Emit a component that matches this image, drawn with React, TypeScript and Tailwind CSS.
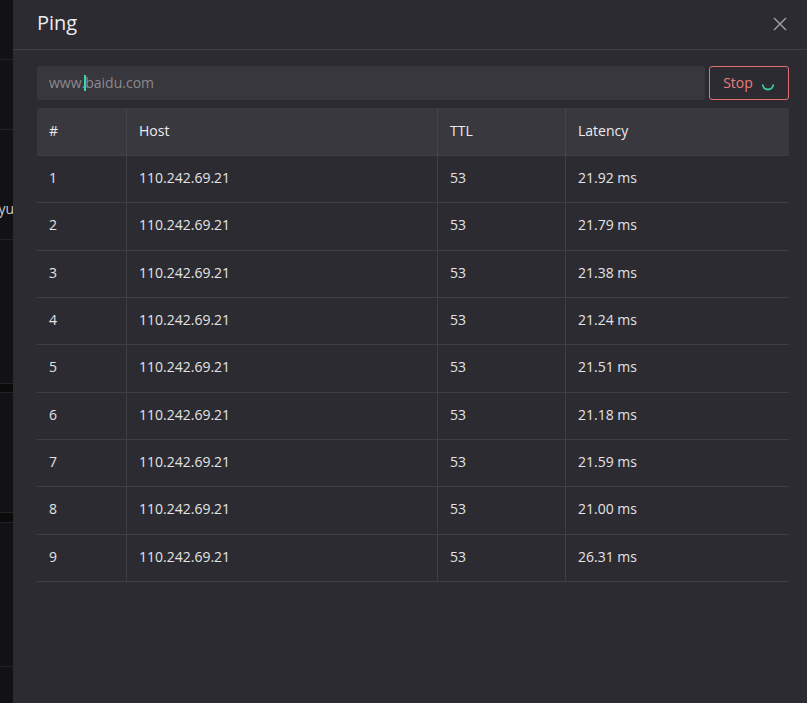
/**
 * Ping drawer — host ping results over a dimmed page.
 */
const ROWS = [
  { seq: 1, host: "110.242.69.21", ttl: 53, latency: "21.92 ms" },
  { seq: 2, host: "110.242.69.21", ttl: 53, latency: "21.79 ms" },
  { seq: 3, host: "110.242.69.21", ttl: 53, latency: "21.38 ms" },
  { seq: 4, host: "110.242.69.21", ttl: 53, latency: "21.24 ms" },
  { seq: 5, host: "110.242.69.21", ttl: 53, latency: "21.51 ms" },
  { seq: 6, host: "110.242.69.21", ttl: 53, latency: "21.18 ms" },
  { seq: 7, host: "110.242.69.21", ttl: 53, latency: "21.59 ms" },
  { seq: 8, host: "110.242.69.21", ttl: 53, latency: "21.00 ms" },
  { seq: 9, host: "110.242.69.21", ttl: 53, latency: "26.31 ms" },
];

const GRID = "grid grid-cols-[89px_311px_128px_1fr]";
const CELL = "flex items-center px-[12px] pb-[3px]";

export default function App() {
  return (
    <div
      className="flex w-[807px] h-[703px] overflow-hidden bg-[#121214] text-[#e3e3e6]"
      style={{ fontFamily: '"Open Sans", "Noto Sans", sans-serif' }}
    >
      <BackdropStrip />

      {/* Drawer */}
      <div className="flex-1 flex flex-col bg-[#2c2b31]">
        <div className="h-[50px] shrink-0 flex items-center justify-between pl-[24px] pr-[20px] border-b border-[#3e3d43]">
          <span className="text-[20px] text-[#ececef] -mt-[4px]">Ping</span>
          <svg width="14" height="14" viewBox="0 0 14 14" className="-mt-[2px]">
            <path d="M1 1L13 13M13 1L1 13" stroke="#a3a3a8" strokeWidth="1.4" />
          </svg>
        </div>

        <div className="flex flex-col pl-[24px] pr-[18px] pt-[16px]">
          {/* Host input + stop */}
          <div className="flex gap-[4px] h-[34px]">
            <div className="flex-1 flex items-center bg-[#38373d] rounded-[2px] px-[12px] pb-[1px] text-[14px] text-[#8b8a90]">
              <span>www.</span>
              <span className="w-[1.5px] h-[16px] bg-[#3dd6a8] -mx-[0.75px]" />
              <span>baidu.com</span>
            </div>
            <button className="w-[80px] flex items-center justify-center gap-[8px] border border-[#e27272] rounded-[3px] text-[14px] text-[#ec7b7b]">
              <span className="-mt-[1px]">Stop</span>
              <svg width="14" height="14" viewBox="0 0 14 14" className="mt-[1px]">
                <path d="M1.8 8.2A5.3 5.3 0 0 0 12.2 8.2" fill="none" stroke="#3ec79f" strokeWidth="1.8" strokeLinecap="round" />
              </svg>
            </button>
          </div>

          {/* Results table */}
          <div className="mt-[8px] text-[14px]">
            <div className={`${GRID} h-[48px] bg-[#39383e] rounded-t-[3px] border-b border-[#3f3e44]`}>
              {["#", "Host", "TTL", "Latency"].map((h, i) => (
                <div
                  key={h}
                  className={`${CELL} text-[#ececef] ${i > 0 ? "border-l border-[#45444a]" : ""}`}
                >
                  {h}
                </div>
              ))}
            </div>
            {ROWS.map((r) => (
              <div key={r.seq} className={`${GRID} h-[47.33px] border-b border-[#403f45]`}>
                <div className={CELL}>{r.seq}</div>
                <div className={`${CELL} border-l border-[#403f45]`}>{r.host}</div>
                <div className={`${CELL} border-l border-[#403f45]`}>{r.ttl}</div>
                <div className={`${CELL} border-l border-[#403f45]`}>{r.latency}</div>
              </div>
            ))}
          </div>
        </div>
      </div>
    </div>
  );
}

function BackdropStrip() {
  return (
    <div className="w-[13px] shrink-0 flex flex-col bg-[#121214]">
      <div className="h-[60px] border-b border-[#232326]" />
      <div className="h-[70px] border-b border-[#232326]" />
      <div className="h-[110px] border-b border-[#232326] flex items-start justify-end overflow-hidden pt-[70px]">
        <span className="text-[14px] leading-[18px] text-[#c9c9cc] whitespace-nowrap -mr-[1px]">yu</span>
      </div>
      <div className="h-[144px] border-b border-[#232326]" />
      <div className="h-[9px] bg-[#0b0b0c] border-b border-[#232326]" />
      <div className="h-[120px] border-b border-[#232326]" />
      <div className="h-[10px] bg-[#0b0b0c] border-b border-[#232326]" />
      <div className="h-[144px] border-b border-[#232326]" />
      <div className="flex-1" />
    </div>
  );
}
